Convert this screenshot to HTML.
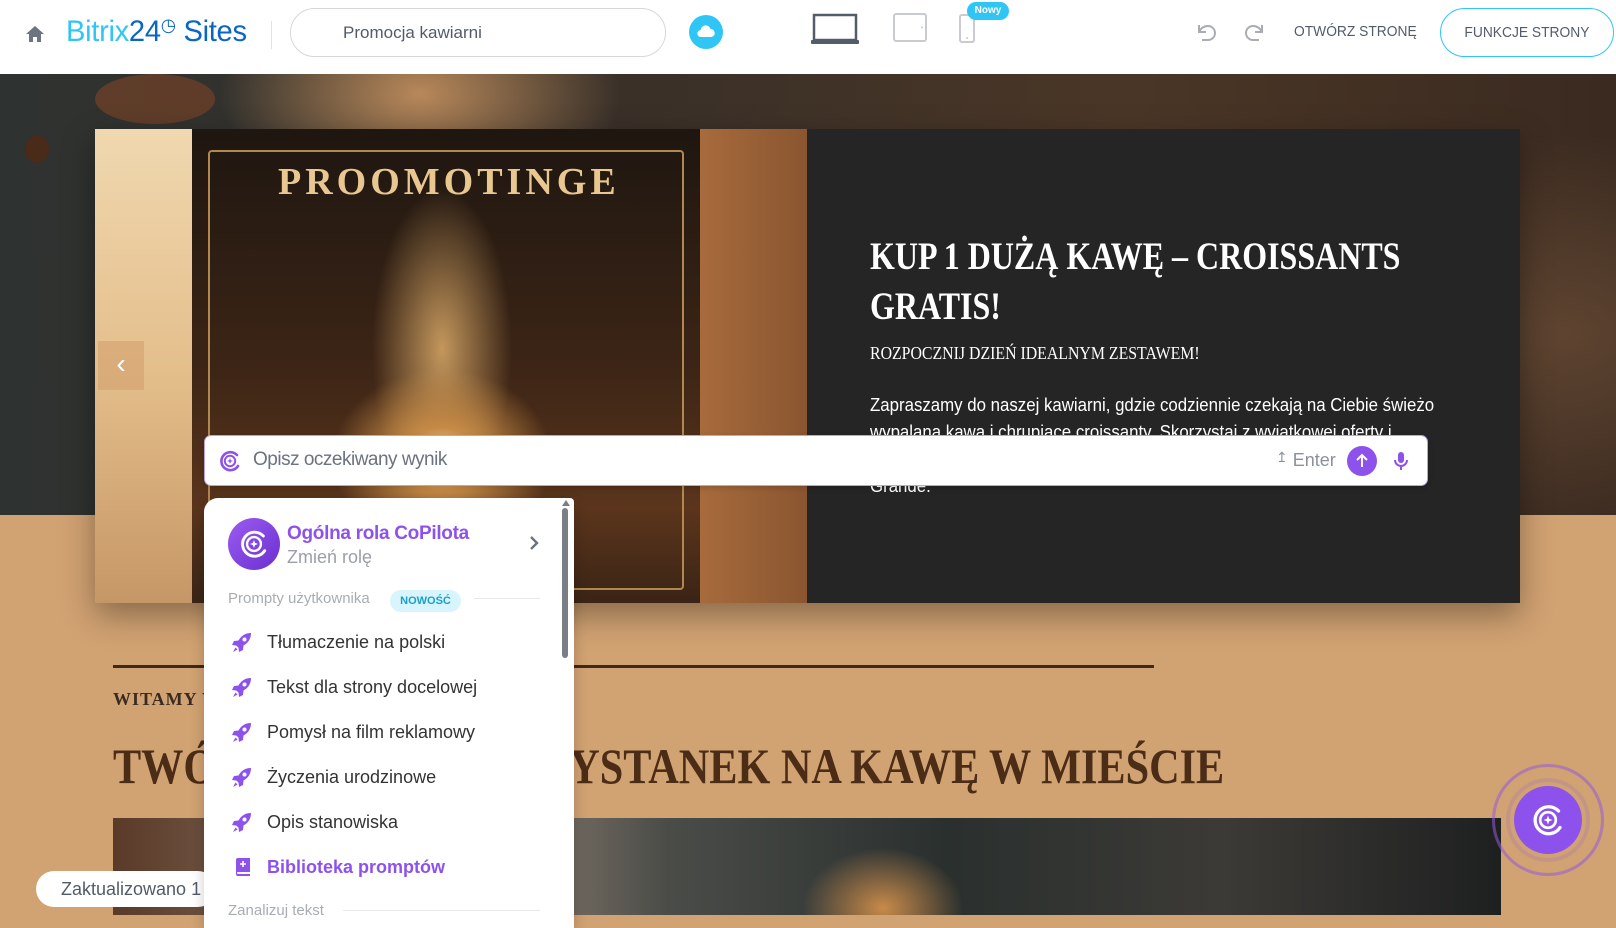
<!DOCTYPE html>
<html><head><meta charset="utf-8">
<style>
*{margin:0;padding:0;box-sizing:border-box}
body{width:1616px;height:915px;overflow:hidden;position:relative;background:#d1a272;font-family:"Liberation Sans",sans-serif}
.abs{position:absolute}
.hdr{left:0;top:0;width:1616px;height:74px;background:#fff}
.hero{left:0;top:74px;width:1616px;height:441px;background:
radial-gradient(ellipse 200px 120px at 420px 20px,#b8885a 0%,rgba(120,80,50,0) 100%),
radial-gradient(ellipse 300px 200px at 1560px 260px,#5e4430 0%,rgba(60,40,30,0) 100%),
linear-gradient(90deg,#2e3230 0%,#3a3028 40%,#4a3626 70%,#3a2a20 100%)}
.serif{font-family:"Liberation Serif",serif}
</style></head><body>
<div class="abs hdr"></div>
<svg class="abs" style="left:25px;top:25px" width="20" height="18" viewBox="0 0 20 18"><path d="M10 1L1 9h3v8h4v-5h4v5h4V9h3z" fill="#6b7480"/></svg>
<div class="abs" style="left:66px;top:15px;font-size:30px;letter-spacing:-0.3px;color:#2fc6f6;white-space:nowrap;transform:scaleX(0.97);transform-origin:left">Bitrix<span style="color:#0b66c3">24</span><span style="color:#0b66c3;font-size:18px;vertical-align:10px">&#9719;</span><span style="color:#0b66c3"> Sites</span></div>
<div class="abs" style="left:271px;top:21px;width:1px;height:28px;background:#e0e3e6"></div>
<div class="abs" style="left:290px;top:8px;width:376px;height:49px;border:1px solid #d5d8dc;border-radius:25px;font-size:17px;color:#525c69;padding:14px 0 0 52px">Promocja kawiarni</div>
<div class="abs" style="left:689px;top:15px;width:34px;height:34px;border-radius:50%;background:#2fc6f6"></div>
<svg class="abs" style="left:697px;top:24px" width="18" height="14" viewBox="0 0 18 14"><path d="M4 13a3.5 3.5 0 0 1-.3-7A5 5 0 0 1 13.5 5 4 4 0 0 1 14 13z" fill="#fff"/></svg>
<svg class="abs" style="left:811px;top:13px" width="48" height="32" viewBox="0 0 48 32"><rect x="3" y="2" width="42" height="25" fill="none" stroke="#535c69" stroke-width="2.5"/><rect x="0" y="27" width="48" height="4" rx="1" fill="#535c69"/></svg>
<svg class="abs" style="left:893px;top:13px" width="34" height="29" viewBox="0 0 34 29"><rect x="1" y="1" width="32" height="27" rx="2" fill="none" stroke="#c8ccd0" stroke-width="2"/><circle cx="29" cy="14.5" r="1" fill="#c8ccd0"/></svg>
<svg class="abs" style="left:959px;top:14px" width="16" height="29" viewBox="0 0 16 29"><rect x="1" y="1" width="14" height="27" rx="2" fill="none" stroke="#c8ccd0" stroke-width="2"/><circle cx="8" cy="24" r="1" fill="#c8ccd0"/></svg>
<div class="abs" style="left:967px;top:2px;width:42px;height:18px;border-radius:9px;background:#2fc6f6;color:#fff;font-size:10px;font-weight:bold;text-align:center;line-height:18px">Nowy</div>
<svg class="abs" style="left:1194px;top:22px" width="24" height="22" viewBox="0 0 24 22"><path d="M5 3v7h7M5 10c2-4 5-6 9-6a7 7 0 0 1 0 14H8" fill="none" stroke="#a8adb4" stroke-width="2"/></svg>
<svg class="abs" style="left:1243px;top:22px" width="24" height="22" viewBox="0 0 24 22"><path d="M19 3v7h-7M19 10c-2-4-5-6-9-6a7 7 0 0 0 0 14h6" fill="none" stroke="#a8adb4" stroke-width="2"/></svg>
<div class="abs" style="left:1294px;top:23px;font-size:15px;color:#525c69;transform:scaleX(0.92);transform-origin:left;white-space:nowrap">OTWÓRZ STRONĘ</div>
<div class="abs" style="left:1440px;top:8px;width:174px;height:49px;border:1px solid #2fc6f6;border-radius:25px;font-size:15px;color:#525c69;text-align:center;line-height:47px;white-space:nowrap"><span style="display:inline-block;transform:scaleX(0.92)">FUNKCJE STRONY</span></div>

<div class="abs hero"></div>
<div class="abs" style="left:25px;top:135px;width:24px;height:28px;border-radius:50%;background:#4a2a18"></div>
<div class="abs" style="left:95px;top:74px;width:120px;height:50px;border-radius:50%;background:#6a4028;opacity:.8"></div>
<div class="abs" style="left:95px;top:129px;width:1425px;height:474px;box-shadow:0 12px 30px rgba(0,0,0,.35)"></div>
<div class="abs" style="left:95px;top:129px;width:97px;height:474px;background:linear-gradient(180deg,#f0d8b0 0%,#e4bf8c 50%,#c69766 100%)"></div>
<div class="abs" style="left:192px;top:129px;width:508px;height:474px;background:
radial-gradient(ellipse 110px 90px at 250px 330px,#f6dca0 0%,#c58a45 35%,rgba(80,40,20,0) 100%),
radial-gradient(ellipse 70px 160px at 250px 220px,rgba(230,180,110,.8) 0%,rgba(80,40,20,0) 100%),
linear-gradient(180deg,#1e1610 0%,#3c2516 50%,#5b351c 80%,#3a2415 100%)"></div>
<div class="abs" style="left:208px;top:150px;width:476px;height:440px;border:2px solid #b08850;border-radius:4px"></div>
<div class="abs serif" style="left:278px;top:160px;font-size:38px;font-weight:bold;color:#e8c890;letter-spacing:4px">PROOMOTINGE</div>
<div class="abs" style="left:700px;top:129px;width:107px;height:474px;background:linear-gradient(90deg,#a76b3c 0%,#8a5530 100%)"></div>
<div class="abs" style="left:98px;top:341px;width:46px;height:49px;background:rgba(210,160,110,.6);color:#fff;font-size:28px;text-align:center;line-height:46px">&#8249;</div>
<div class="abs" style="left:807px;top:129px;width:713px;height:474px;background:#252525"></div>
<div class="abs serif" style="left:870px;top:232px;font-size:39px;font-weight:bold;color:#fff;line-height:50px;white-space:nowrap;transform:scaleX(0.82);transform-origin:left">KUP 1 DUŻĄ KAWĘ – CROISSANTS<br>GRATIS!</div>
<div class="abs serif" style="left:870px;top:343px;font-size:18px;color:#fff;white-space:nowrap;transform:scaleX(0.88);transform-origin:left">ROZPOCZNIJ DZIEŃ IDEALNYM ZESTAWEM!</div>
<div class="abs" style="left:870px;top:392px;font-size:18px;color:#fff;line-height:27px;white-space:nowrap;transform:scaleX(0.935);transform-origin:left">Zapraszamy do naszej kawiarni, gdzie codziennie czekają na Ciebie świeżo<br>wypalana kawa i chrupiące croissanty. Skorzystaj z wyjątkowej oferty i<br>kup dowolną dużą kawę, a croissant dostaniesz gratis! Oferta ważna do<br>Grande.</div>

<div class="abs" style="left:113px;top:665px;width:1041px;height:3px;background:#3a2a20"></div>
<div class="abs serif" style="left:113px;top:689px;font-size:18px;font-weight:bold;color:#3a2a20;letter-spacing:1px">WITAMY W NASZEJ KAWIARNI</div>
<div class="abs serif" style="left:113px;top:737px;font-size:50px;font-weight:bold;color:#4b2c17;white-space:nowrap;transform:scaleX(0.845);transform-origin:left">TWÓJ ULUBIONY PRZYSTANEK NA KAWĘ W MIEŚCIE</div>
<div class="abs" style="left:113px;top:818px;width:1388px;height:97px;background:
radial-gradient(ellipse 80px 60px at 770px 90px,#c88a4a 0%,rgba(100,60,30,0) 100%),
linear-gradient(90deg,#5a3a28 0%,#9a8878 25%,#4a4c48 40%,#2a302e 60%,#3c3a36 80%,#1e2020 100%)"></div>
<div class="abs" style="left:36px;top:871px;width:180px;height:36px;background:#fff;border-radius:18px;font-size:18px;color:#525c69;padding:8px 0 0 25px;white-space:nowrap">Zaktualizowano 1</div>

<div class="abs" style="left:204px;top:435px;width:1224px;height:51px;background:#fff;border:1px solid #b9a3e0;border-radius:7px;box-shadow:0 2px 6px rgba(0,0,0,.15)"></div>
<svg class="abs" style="left:218px;top:449px" width="24" height="24" viewBox="0 0 24 24"><path d="M19 6A9 9 0 1 0 20 17" fill="none" stroke="#8e52ec" stroke-width="2.6" stroke-linecap="round"/><circle cx="12" cy="12" r="5.2" fill="none" stroke="#8e52ec" stroke-width="2"/><path d="M12 9l.8 2.2 2.2.8-2.2.8L12 15l-.8-2.2L9 12l2.2-.8z" fill="#8e52ec"/></svg>
<div class="abs" style="left:253px;top:449px;font-size:19px;color:#6a737f;letter-spacing:-0.5px">Opisz oczekiwany wynik</div>
<div class="abs" style="left:1276px;top:449px;font-size:18px;color:#8a919a"><span style="font-size:14px;vertical-align:4px">&#8613;</span> Enter</div>
<div class="abs" style="left:1347px;top:446px;width:30px;height:30px;border-radius:50%;background:#8e52ec"></div>
<svg class="abs" style="left:1354px;top:453px" width="16" height="16" viewBox="0 0 16 16"><path d="M8 14V2M3 7l5-5 5 5" fill="none" stroke="#fff" stroke-width="2"/></svg>
<svg class="abs" style="left:1393px;top:451px" width="16" height="20" viewBox="0 0 16 20"><rect x="5" y="1" width="6" height="11" rx="3" fill="#8e52ec"/><path d="M2 9a6 6 0 0 0 12 0M8 15v4" fill="none" stroke="#8e52ec" stroke-width="2"/></svg>

<div class="abs" style="left:204px;top:498px;width:370px;height:430px;background:#fff;border-radius:14px 4px 0 0;box-shadow:0 4px 14px rgba(0,0,0,.2)"></div>
<div class="abs" style="left:562px;top:508px;width:6px;height:150px;border-radius:3px;background:#7a7f85"></div>
<div class="abs" style="left:562px;top:500px;width:0;height:0;border-left:4px solid transparent;border-right:4px solid transparent;border-bottom:6px solid #7a7f85"></div>
<div class="abs" style="left:228px;top:518px;width:52px;height:52px;border-radius:50%;background:linear-gradient(135deg,#9c5cf2,#6a2fd0)"></div>
<svg class="abs" style="left:238px;top:528px" width="32" height="32" viewBox="0 0 24 24"><path d="M19 6A9 9 0 1 0 20 17" fill="none" stroke="#fff" stroke-width="2.2" stroke-linecap="round"/><circle cx="12" cy="12" r="5.2" fill="none" stroke="#fff" stroke-width="1.8"/><path d="M12 9l.8 2.2 2.2.8-2.2.8L12 15l-.8-2.2L9 12l2.2-.8z" fill="#fff"/></svg>
<div class="abs" style="left:287px;top:523px;font-size:19px;font-weight:bold;color:#8e52ec;letter-spacing:-0.3px">Ogólna rola CoPilota</div>
<div class="abs" style="left:287px;top:547px;font-size:18px;color:#9aa0a8">Zmień rolę</div>
<svg class="abs" style="left:528px;top:535px" width="12" height="16" viewBox="0 0 12 16"><path d="M3 2l6 6-6 6" fill="none" stroke="#6a737f" stroke-width="2.4"/></svg>
<div class="abs" style="left:228px;top:590px;font-size:15px;color:#a8adb4">Prompty użytkownika</div>
<div class="abs" style="left:390px;top:590px;width:71px;height:22px;border-radius:11px;background:#d8f4fc;color:#1a9fc7;font-size:11px;font-weight:bold;text-align:center;line-height:22px">NOWOŚĆ</div>
<div class="abs" style="left:474px;top:598px;width:66px;height:1px;background:#e6e8ea"></div>
<div class="abs" style="left:267px;top:620px;font-size:18px;color:#333;line-height:45px">Tłumaczenie na polski<br>Tekst dla strony docelowej<br>Pomysł na film reklamowy<br>Życzenia urodzinowe<br>Opis stanowiska<br><b style="color:#8e52ec">Biblioteka promptów</b></div>
<svg class="abs" style="left:232px;top:632px" width="20" height="205" viewBox="0 0 20 205">
<defs><g id="r"><path d="M19 1C13 1 9 4 6.5 8.5L2 9 0 13l4.5.6 2 2 .5 4.4 4-2 .5-4.5C16 11 19 7 19 1z" fill="#8e52ec"/><circle cx="12.5" cy="7.5" r="2" fill="#fff"/><path d="M3.5 15.5L1 20l4.5-2.5z" fill="#8e52ec"/></g></defs>
<use href="#r" y="0"/><use href="#r" y="45"/><use href="#r" y="90"/><use href="#r" y="135"/><use href="#r" y="180"/></svg>
<svg class="abs" style="left:235px;top:858px" width="16" height="18" viewBox="0 0 16 18"><path d="M1 2a2 2 0 0 1 2-2h12v14H3a1 1 0 0 0 0 2h12v2H3a2 2 0 0 1-2-2z" fill="#8e52ec"/><path d="M8 3v6M5 6h6" stroke="#fff" stroke-width="1.6"/></svg>
<div class="abs" style="left:228px;top:902px;font-size:15px;color:#a8adb4">Zanalizuj tekst</div>
<div class="abs" style="left:343px;top:910px;width:197px;height:1px;background:#e6e8ea"></div>

<div class="abs" style="left:1492px;top:764px;width:112px;height:112px;border-radius:50%;border:3px solid rgba(150,90,220,.55)"></div>
<div class="abs" style="left:1506px;top:778px;width:84px;height:84px;border-radius:50%;border:4px solid rgba(160,110,200,.25)"></div>
<div class="abs" style="left:1514px;top:786px;width:68px;height:68px;border-radius:50%;background:#8e52ec"></div>
<svg class="abs" style="left:1530px;top:802px" width="36" height="36" viewBox="0 0 24 24"><path d="M19 6A9 9 0 1 0 20 17" fill="none" stroke="#fff" stroke-width="2.2" stroke-linecap="round"/><circle cx="12" cy="12" r="5.2" fill="none" stroke="#fff" stroke-width="1.8"/><path d="M12 9l.8 2.2 2.2.8-2.2.8L12 15l-.8-2.2L9 12l2.2-.8z" fill="#fff"/></svg>
</body></html>
